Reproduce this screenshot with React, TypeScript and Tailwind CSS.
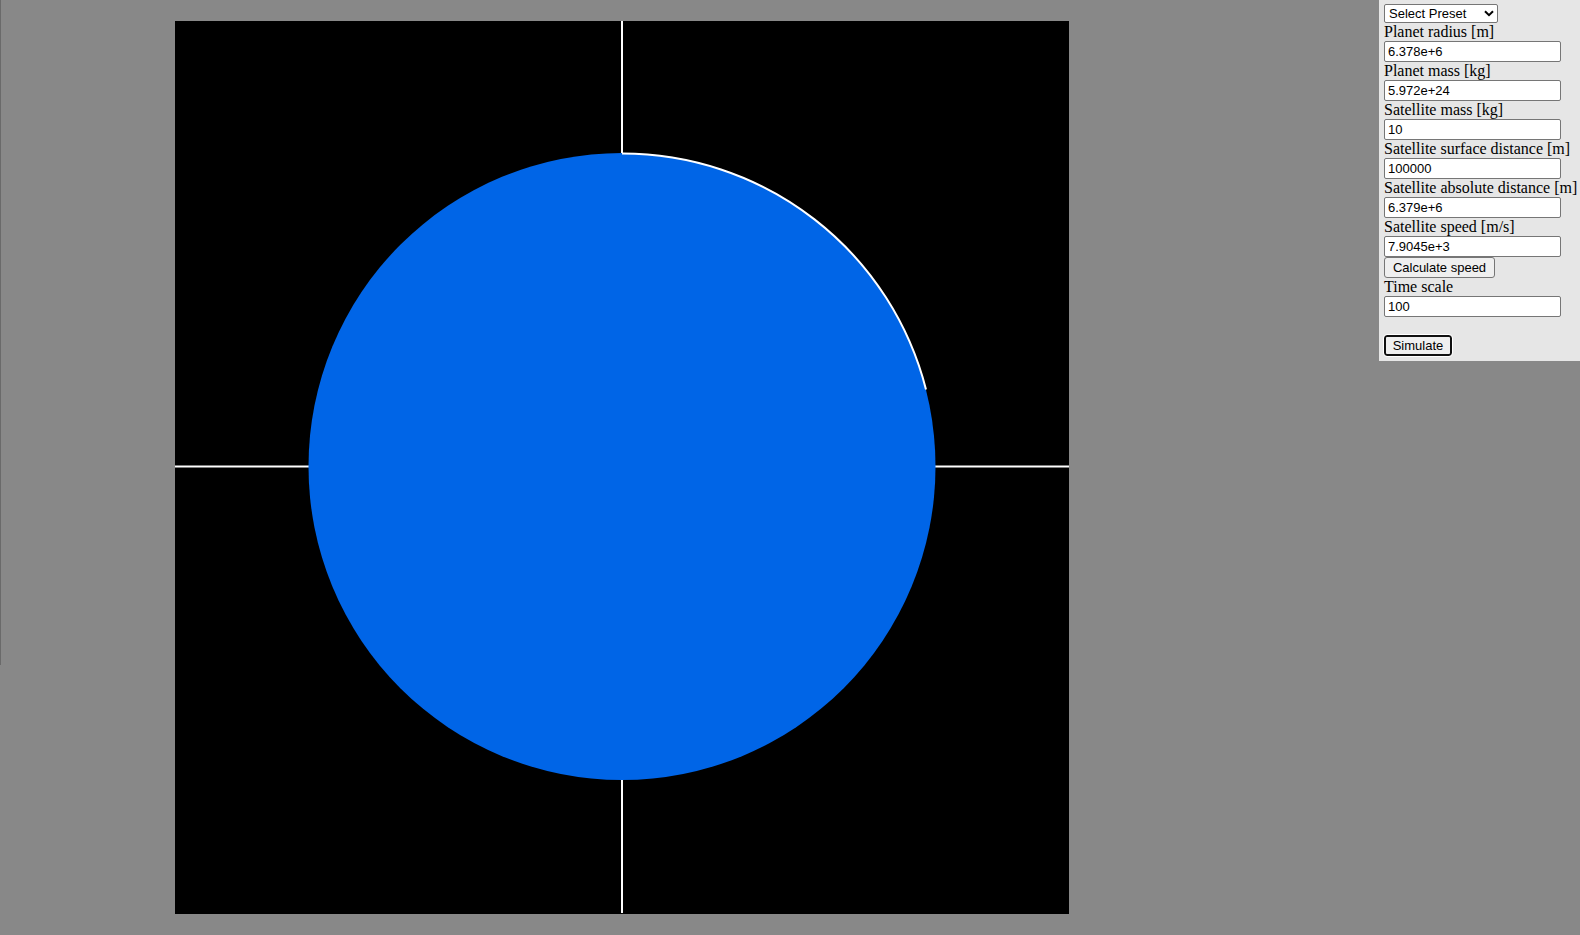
import { useState } from "react";

const font = "font-['Liberation_Sans',Arial,sans-serif] text-[13px] leading-[15px] text-black";

type FieldProps = { id: string; label: string; initial: string };

function Field({ id, label, initial }: FieldProps) {
  const [value, setValue] = useState(initial);
  return (
    <div className="flex flex-col items-start">
      <label htmlFor={id} className="h-[18px] whitespace-nowrap leading-[18px]">
        {label}
      </label>
      <input
        id={id}
        type="text"
        value={value}
        onChange={(e) => setValue(e.target.value)}
        className={`h-[21px] w-[177px] rounded-xs border border-[#767676] bg-white px-[3px] ${font}`}
      />
    </div>
  );
}

function OrbitView() {
  return (
    <svg
      viewBox="0 0 894 893"
      role="img"
      aria-label="Orbit"
      className="mt-[21px] ml-[174px] aspect-[894/893] h-[calc(100vh-42px)] shrink-0 bg-black"
    >
      <path d="M447 0V892M0 445.5H894" stroke="#fff" strokeWidth="2" />
      <circle cx="447" cy="445.5" r="313.5" fill="#0065e7" />
      <path
        d="M447 132.5A313.5 313.5 0 0 1 751 368.5"
        fill="none"
        stroke="#fff"
        strokeWidth="2"
      />
    </svg>
  );
}

export default function App() {
  return (
    <div className="flex min-h-screen items-start bg-[#888888]">
      <div className="h-[665px] w-px shrink-0 bg-[#6a6a6a]" />
      <main className="flex min-w-0 flex-1">
        <OrbitView />
      </main>
      <aside className="flex w-[201px] shrink-0 flex-col items-start bg-[#e6e6e6] px-[5px] pt-1 pb-[5px] font-['Liberation_Serif','Times_New_Roman',serif] text-base text-black">
        <div className="relative">
          <select
            aria-label="Preset"
            className={`block h-[19px] w-[114px] appearance-none rounded-xs border border-[#767676] bg-white pl-1 ${font}`}
          >
            <option>Select Preset</option>
          </select>
          <svg
            viewBox="0 0 10 7"
            className="pointer-events-none absolute top-[6px] right-1 h-[7px] w-[10px]"
          >
            <path d="M1 1.2L5 5.2L9 1.2" fill="none" stroke="#000" strokeWidth="2" />
          </svg>
        </div>
        <Field id="radius" label="Planet radius [m]" initial="6.378e+6" />
        <Field id="planet-mass" label="Planet mass [kg]" initial="5.972e+24" />
        <Field id="satellite-mass" label="Satellite mass [kg]" initial="10" />
        <Field id="surface" label="Satellite surface distance [m]" initial="100000" />
        <Field id="absolute" label="Satellite absolute distance [m]" initial="6.379e+6" />
        <Field id="speed" label="Satellite speed [m/s]" initial="7.9045e+3" />
        <button
          type="button"
          className={`h-[21px] w-[111px] rounded-[3px] border border-[#767676] bg-[#efefef] ${font}`}
        >
          Calculate speed
        </button>
        <Field id="time" label="Time scale" initial="100" />
        <button
          type="button"
          className={`mt-[18px] h-[21px] w-[68px] rounded-[3px] border-2 border-[#101010] bg-[#efefef] outline outline-white ${font}`}
        >
          Simulate
        </button>
      </aside>
    </div>
  );
}
